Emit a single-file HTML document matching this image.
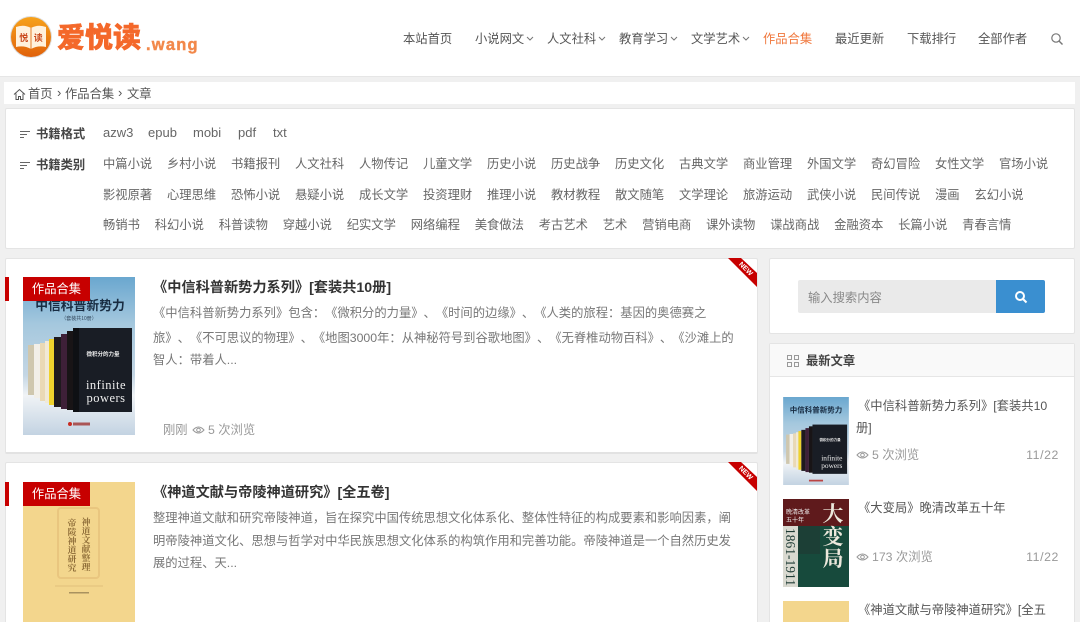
<!DOCTYPE html>
<html lang="zh-CN"><head><meta charset="utf-8"><title>爱悦读</title>
<style>
*{margin:0;padding:0;box-sizing:border-box}
html,body{width:1080px;height:622px;overflow:hidden;background:#f0f0f0}
body{position:relative;font-family:"Liberation Sans","Noto Sans CJK SC",sans-serif;font-size:12.3px;color:#777;text-spacing-trim:space-all}
.a{position:absolute;white-space:nowrap;line-height:18px}
.box{position:absolute;background:#fff;border:1px solid #e4e4e4;border-radius:2px}
.n{color:#555;top:30px}
.row{position:absolute;left:103px;display:flex;gap:14.8px;white-space:nowrap;line-height:18px;color:#666}
.row span{display:block}
.t{font-weight:700;color:#333;font-size:14.2px}
.d{color:#777}
.tag{position:absolute;left:23px;width:67px;height:24px;background:#c70000;color:#fff;font-size:12.3px;line-height:24px;text-align:center}
.bar{position:absolute;left:5px;width:4px;height:24px;background:#c70000}
.cov{position:absolute;overflow:hidden}
.f{color:#666;top:124px;font-size:13px}
svg{display:block}
</style></head><body>

<div style="position:absolute;left:0;top:0;width:1080px;height:77px;background:#fff;border-bottom:1px solid #e6e6e6"></div>
<svg style="position:absolute;left:8px;top:14px" width="46" height="46" viewBox="0 0 46 46">
<defs><linearGradient id="g" x1="0" y1="0" x2="0" y2="1"><stop offset="0" stop-color="#f7a21a"/><stop offset="1" stop-color="#e0610b"/></linearGradient></defs>
<circle cx="23" cy="23" r="21" fill="#ddd"/><circle cx="23" cy="23" r="20" fill="url(#g)"/>
<path d="M8 13q8-3 15 1q7-4 15-1v20q-8-2-15 2q-7-4-15-2z" fill="#fff1dc"/><path d="M23 14v21" stroke="#e3802c"/>
<text x="15.8" y="27" font-size="9" font-weight="700" fill="#c9481c" text-anchor="middle" font-family="Noto Sans CJK SC">悦</text>
<text x="30.2" y="27" font-size="9" font-weight="700" fill="#c9481c" text-anchor="middle" font-family="Noto Sans CJK SC">读</text></svg>
<div class="a" style="left:57px;top:22px;font-size:28px;line-height:32px;font-weight:900;color:#f4682a;-webkit-text-stroke:.5px #f4682a">爱悦读</div>
<div class="a" style="left:146px;top:35px;font-size:16.500px;font-weight:700;line-height:20px;color:#f2884a;letter-spacing:1.2px;-webkit-text-stroke:.4px #f2884a">.wang</div>

<div class="a n" style="left:403px">本站首页</div>
<div class="a n" style="left:475px">小说网文</div>
<div class="a n" style="left:547px">人文社科</div>
<div class="a n" style="left:619px">教育学习</div>
<div class="a n" style="left:691px">文学艺术</div>
<div class="a n" style="left:763px;color:#f0773c">作品合集</div>
<div class="a n" style="left:835px">最近更新</div>
<div class="a n" style="left:907px">下载排行</div>
<div class="a n" style="left:978px">全部作者</div>
<svg style="position:absolute;left:0;top:0" width="1080" height="77" fill="none" stroke="#777" stroke-width="1">
<path d="M527 37l3 3 3-3M599 37l3 3 3-3M671 37l3 3 3-3M743 37l3 3 3-3"/>
<circle cx="1056" cy="38" r="4.2" stroke-width="1.2"/><path d="M1059 41l3.5 3.5" stroke-width="1.4"/></svg>

<div style="position:absolute;left:4px;top:82px;width:1071px;height:22px;background:#fff"></div>
<svg style="position:absolute;left:13px;top:88px" width="13" height="13" fill="none" stroke="#555"><path d="M1 6.500L6.500 1.500 12 6.500M3 5.500v6h2.500v-3h2v3H10v-6"/></svg>
<div class="a" style="left:28px;top:85px;color:#555">首页</div>
<div class="a" style="left:57px;top:84px;color:#555;font-size:13px">›</div>
<div class="a" style="left:65px;top:85px;color:#555">作品合集</div>
<div class="a" style="left:118px;top:84px;color:#555;font-size:13px">›</div>
<div class="a" style="left:127px;top:85px;color:#555">文章</div>

<div class="box" style="left:5px;top:108px;width:1070px;height:141px"></div>
<svg style="position:absolute;left:20px;top:130px" width="12" height="40" stroke="#666"><path d="M0 1.500h10M0 4.500h7M0 7.500h4M0 32.500h10M0 35.500h7M0 38.500h4"/></svg>
<div class="a" style="left:36px;top:125px;font-weight:700;color:#444">书籍格式</div>
<div class="a" style="left:36px;top:156px;font-weight:700;color:#444">书籍类别</div>
<div class="a f" style="left:103px">azw3</div><div class="a f" style="left:148px">epub</div><div class="a f" style="left:193px">mobi</div><div class="a f" style="left:238px">pdf</div><div class="a f" style="left:273px">txt</div>
<div class="row" style="top:155px"><span>中篇小说</span><span>乡村小说</span><span>书籍报刊</span><span>人文社科</span><span>人物传记</span><span>儿童文学</span><span>历史小说</span><span>历史战争</span><span>历史文化</span><span>古典文学</span><span>商业管理</span><span>外国文学</span><span>奇幻冒险</span><span>女性文学</span><span>官场小说</span></div>
<div class="row" style="top:186px"><span>影视原著</span><span>心理思维</span><span>恐怖小说</span><span>悬疑小说</span><span>成长文学</span><span>投资理财</span><span>推理小说</span><span>教材教程</span><span>散文随笔</span><span>文学理论</span><span>旅游运动</span><span>武侠小说</span><span>民间传说</span><span>漫画</span><span>玄幻小说</span></div>
<div class="row" style="top:216px"><span>畅销书</span><span>科幻小说</span><span>科普读物</span><span>穿越小说</span><span>纪实文学</span><span>网络编程</span><span>美食做法</span><span>考古艺术</span><span>艺术</span><span>营销电商</span><span>课外读物</span><span>谍战商战</span><span>金融资本</span><span>长篇小说</span><span>青春言情</span></div>

<!-- card 1 -->
<div class="box" style="left:5px;top:258px;width:753px;height:196px;border-bottom:2px solid #e2e2e2"></div>
<svg class="cov" style="left:23px;top:277px" width="112" height="158" viewBox="0 0 112 158">
<defs><linearGradient id="s" x1="0" y1="0" x2="0" y2="1"><stop offset="0" stop-color="#6aa7cf"/><stop offset=".3" stop-color="#a5c8de"/><stop offset=".62" stop-color="#c4d6e4"/><stop offset=".75" stop-color="#f0f3f6"/><stop offset="1" stop-color="#c3d3e2"/></linearGradient></defs>
<rect width="112" height="158" fill="url(#s)"/>
<text x="57" y="33" text-anchor="middle" font-size="12.800" font-weight="700" fill="#182c42" font-family="Noto Sans CJK SC">中信科普新势力</text>
<text x="56" y="43" text-anchor="middle" font-size="5" fill="#34495e" font-family="Noto Sans CJK SC">（套装共10册）</text>
<rect x="5" y="68" width="6" height="50" fill="#cfc7ae"/><rect x="11" y="67" width="6" height="54" fill="#f2efe8"/><rect x="17" y="66" width="5" height="58" fill="#ead9b5"/><rect x="22" y="64" width="4" height="62" fill="#f1e9d6"/><rect x="26" y="62" width="5" height="66" fill="#efd22d"/><rect x="31" y="60" width="7" height="70" fill="#1f1a1e"/><rect x="38" y="57" width="6" height="75" fill="#3e2038"/><rect x="44" y="54" width="6" height="79" fill="#181416"/>
<rect x="50" y="51" width="59" height="84" fill="#191d25"/><rect x="50" y="51" width="6" height="84" fill="#0e1014"/>
<text x="80" y="79" text-anchor="middle" font-size="5.500" fill="#eee" font-weight="700" font-family="Noto Sans CJK SC">微积分的力量</text>
<text x="83" y="112" text-anchor="middle" font-size="12.500" fill="#eee" font-family="Liberation Serif" letter-spacing=".5">infinite</text>
<text x="83" y="125" text-anchor="middle" font-size="12.500" fill="#eee" font-family="Liberation Serif" letter-spacing=".5">powers</text>
<circle cx="47" cy="147" r="2" fill="#c82c22"/><rect x="50" y="145.500" width="17" height="3" fill="#a55"/></svg>
<div class="bar" style="top:277px"></div><div class="tag" style="top:277px">作品合集</div>
<div class="a t" style="left:153px;top:279px">《中信科普新势力系列》[套装共10册]</div>
<div class="a d" style="left:153px;top:304px">《中信科普新势力系列》包含：《微积分的力量》、《时间的边缘》、《人类的旅程：基因的奥德赛之</div>
<div class="a d" style="left:153px;top:329px">旅》、《不可思议的物理》、《地图3000年：从神秘符号到谷歌地图》、《无脊椎动物百科》、《沙滩上的</div>
<div class="a d" style="left:153px;top:351px">智人：带着人...</div>
<div class="a" style="left:163px;top:421px;color:#999">刚刚</div>
<svg style="position:absolute;left:192px;top:424px" width="13" height="12" fill="none" stroke="#999"><path d="M1 6q5.500-6 11 0q-5.500 6-11 0z"/><circle cx="6.500" cy="6" r="1.800"/></svg>
<div class="a" style="left:208px;top:421px;color:#999">5 次浏览</div>
<svg style="position:absolute;left:727px;top:258px" width="31" height="30"><path d="M1 0H14L30 15V29z" fill="#c70000"/><text x="0" y="0" transform="translate(11.500 6.600) rotate(45)" font-size="7" font-weight="700" fill="#fff" font-family="Liberation Sans">NEW</text></svg>

<!-- card 2 -->
<div class="box" style="left:5px;top:462px;width:753px;height:170px"></div>
<svg class="cov" style="left:23px;top:482px" width="112" height="140" viewBox="0 0 112 140">
<rect width="112" height="140" fill="#f3d68d"/><rect x="35" y="26" width="41" height="70" rx="3" fill="none" stroke="#e9c67f" stroke-width="2"/>
<g font-family="Noto Serif CJK SC" font-size="8.800" fill="#8c6b37" font-weight="700" text-anchor="middle"><text x="63" y="43">神</text><text x="63" y="52">道</text><text x="63" y="61">文</text><text x="63" y="70">献</text><text x="63" y="79">整</text><text x="63" y="88">理</text><text x="49" y="44">帝</text><text x="49" y="53">陵</text><text x="49" y="62">神</text><text x="49" y="71">道</text><text x="49" y="80">研</text><text x="49" y="89">究</text></g>
<path d="M32 104h48" stroke="#e0c07c"/><rect x="46" y="110" width="20" height="1.500" fill="#a9925f"/></svg>
<div class="bar" style="top:482px"></div><div class="tag" style="top:482px">作品合集</div>
<div class="a t" style="left:153px;top:484px">《神道文献与帝陵神道研究》[全五卷]</div>
<div class="a d" style="left:153px;top:509px">整理神道文献和研究帝陵神道，旨在探究中国传统思想文化体系化、整体性特征的构成要素和影响因素，阐</div>
<div class="a d" style="left:153px;top:532px">明帝陵神道文化、思想与哲学对中华民族思想文化体系的构筑作用和完善功能。帝陵神道是一个自然历史发</div>
<div class="a d" style="left:153px;top:554px">展的过程、天...</div>
<svg style="position:absolute;left:727px;top:462px" width="31" height="30"><path d="M1 0H14L30 15V29z" fill="#c70000"/><text x="0" y="0" transform="translate(11.500 6.600) rotate(45)" font-size="7" font-weight="700" fill="#fff" font-family="Liberation Sans">NEW</text></svg>

<!-- sidebar -->
<div class="box" style="left:769px;top:258px;width:306px;height:76px"></div>
<div style="position:absolute;left:798px;top:280px;width:198px;height:33px;background:#eaeaea;border-radius:2px 0 0 2px"></div>
<div class="a" style="left:808px;top:289px;color:#888">输入搜索内容</div>
<div style="position:absolute;left:996px;top:280px;width:49px;height:33px;background:#3a8fd0;border-radius:0 2px 2px 0"></div>
<svg style="position:absolute;left:1014px;top:290px" width="14" height="14" fill="none" stroke="#fff" stroke-width="2"><circle cx="6" cy="6" r="4"/><path d="M9 9l3.500 3.500"/></svg>

<div class="box" style="left:769px;top:343px;width:306px;height:290px"></div>
<div style="position:absolute;left:770px;top:344px;width:304px;height:33px;background:#f9f9f9;border-bottom:1px solid #e6e6e6"></div>
<svg style="position:absolute;left:787px;top:355px" width="12" height="12" fill="none" stroke="#999"><path d="M.5.500h4v4h-4zM7.500.500h4v4h-4zM.5 7.500h4v4h-4zM7.500 7.500h4v4h-4z"/></svg>
<div class="a" style="left:806px;top:352px;font-weight:700;color:#444">最新文章</div>

<svg class="cov" style="left:783px;top:397px" width="66" height="88" viewBox="0 0 112 150">
<rect width="112" height="150" fill="url(#s)"/>
<text x="56" y="26" text-anchor="middle" font-size="12.800" font-weight="700" fill="#182c42" font-family="Noto Sans CJK SC">中信科普新势力</text>
<rect x="5" y="64" width="6" height="50" fill="#cfc7ae"/><rect x="11" y="63" width="6" height="54" fill="#f2efe8"/><rect x="17" y="62" width="5" height="58" fill="#ead9b5"/><rect x="22" y="60" width="4" height="62" fill="#f1e9d6"/><rect x="26" y="58" width="5" height="66" fill="#efd22d"/><rect x="31" y="56" width="7" height="70" fill="#1f1a1e"/><rect x="38" y="53" width="6" height="75" fill="#3e2038"/><rect x="44" y="50" width="6" height="79" fill="#181416"/>
<rect x="50" y="47" width="59" height="84" fill="#191d25"/>
<text x="80" y="75" text-anchor="middle" font-size="6" fill="#eee" font-weight="700" font-family="Noto Sans CJK SC">微积分的力量</text>
<text x="83" y="108" text-anchor="middle" font-size="12.500" fill="#eee" font-family="Liberation Serif">infinite</text>
<text x="83" y="121" text-anchor="middle" font-size="12.500" fill="#eee" font-family="Liberation Serif">powers</text>
<rect x="44" y="141" width="24" height="3" fill="#b44"/></svg>
<div class="a" style="left:858px;top:397px;color:#555">《中信科普新势力系列》[套装共10</div>
<div class="a" style="left:856px;top:419px;color:#555">册]</div>
<svg style="position:absolute;left:856px;top:449px" width="13" height="12" fill="none" stroke="#999"><path d="M1 6q5.500-6 11 0q-5.500 6-11 0z"/><circle cx="6.500" cy="6" r="1.800"/></svg>
<div class="a" style="left:872px;top:446px;color:#999">5 次浏览</div>
<div class="a" style="right:21px;top:446px;color:#999;letter-spacing:.6px">11/22</div>

<svg class="cov" style="left:783px;top:499px" width="66" height="88" viewBox="0 0 66 88">
<rect width="66" height="88" fill="#174a3c"/><rect width="66" height="27" fill="#5f1a1c"/><rect y="27" width="15" height="61" fill="#d9d9d0"/><rect x="15" y="27" width="22" height="28" fill="#1c3f36"/>
<text x="50" y="22" text-anchor="middle" font-size="21" font-weight="700" fill="#ece8dc" font-family="Noto Serif CJK SC">大</text>
<text x="50" y="45" text-anchor="middle" font-size="21" font-weight="700" fill="#ece8dc" font-family="Noto Serif CJK SC">变</text>
<text x="50" y="67" text-anchor="middle" font-size="21" font-weight="700" fill="#ece8dc" font-family="Noto Serif CJK SC">局</text>
<text x="3" y="15" font-size="6" fill="#eee" font-family="Noto Sans CJK SC">晚清改革</text><text x="3" y="23" font-size="6" fill="#eee" font-family="Noto Sans CJK SC">五十年</text>
<text transform="translate(3 29) rotate(90)" font-size="13.500" fill="#1d3a33" font-family="Liberation Serif">1861-1911</text></svg>
<div class="a" style="left:858px;top:499px;color:#555">《大变局》晚清改革五十年</div>
<svg style="position:absolute;left:856px;top:551px" width="13" height="12" fill="none" stroke="#999"><path d="M1 6q5.500-6 11 0q-5.500 6-11 0z"/><circle cx="6.500" cy="6" r="1.800"/></svg>
<div class="a" style="left:872px;top:548px;color:#999">173 次浏览</div>
<div class="a" style="right:21px;top:548px;color:#999;letter-spacing:.6px">11/22</div>

<div style="position:absolute;left:783px;top:601px;width:66px;height:21px;background:#f3d68d"></div>
<div class="a" style="left:858px;top:601px;color:#555">《神道文献与帝陵神道研究》[全五</div>
</body></html>
